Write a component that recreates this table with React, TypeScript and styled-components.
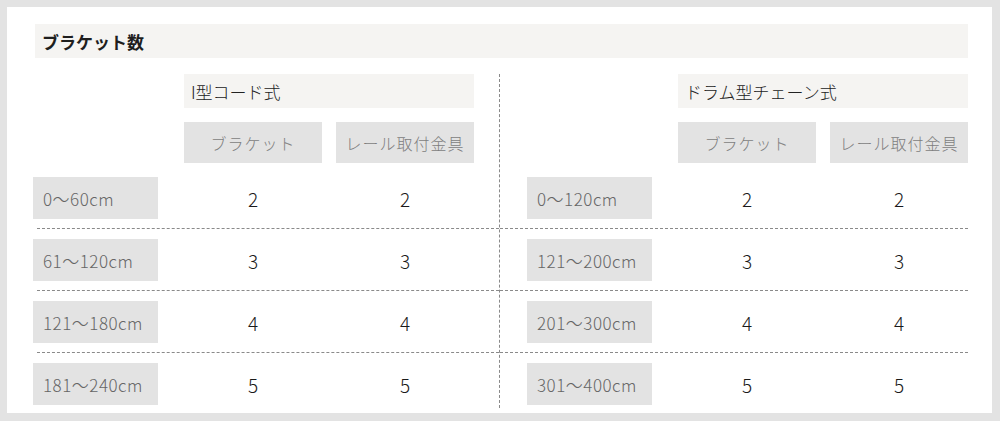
import React from 'react';
import styled, { createGlobalStyle } from 'styled-components';

const GlobalStyle = createGlobalStyle`
    html, body {
        margin: 0;
        padding: 0;
        background: #e3e3e3;
    }
    body {
        font-family: "Noto Sans CJK JP", "Noto Sans", sans-serif;
        color: #222;
    }
`;

const Panel = styled.div`
    margin: 7px 8px 8px 7px;
    background: #fff;
    height: 406px;
    box-sizing: border-box;
    padding: 17px 24px 0 26px;
    display: flex;
    flex-direction: column;
`;

const TitleBar = styled.div`
    margin-left: 2px;
    height: 34px;
    background: #f5f4f2;
    display: flex;
    align-items: center;
    padding-left: 7px;
    font-size: 17px;
    font-weight: bold;
    color: #1e1e1e;
`;

const Tables = styled.div`
    display: flex;
    margin-top: 16px;
`;

const Half = styled.div<{ $left?: boolean }>`
    display: flex;
    flex-direction: column;
    width: 468px;
    border-right: ${p => (p.$left ? '1px dashed #8a8a8a' : 'none')};
    padding-left: ${p => (p.$left ? '0' : '27px')};
    box-sizing: border-box;
`;

const GroupHeader = styled.div`
    margin-left: 151px;
    width: 290px;
    height: 34px;
    background: #f5f4f2;
    display: flex;
    align-items: center;
    padding-left: 7px;
    box-sizing: border-box;
    font-size: 17px;
    font-weight: 300;
    color: #222;
`;

const SubRow = styled.div`
    display: flex;
    margin-top: 14px;
    margin-left: 151px;
    gap: 14px;
    margin-bottom: 4px;
`;

const SubHeader = styled.div`
    width: 138px;
    height: 41px;
    background: #e3e3e3;
    display: flex;
    align-items: center;
    justify-content: center;
    font-size: 16px;
    font-weight: 300;
    letter-spacing: 1px;
    color: #7e7e7e;
`;

const Row = styled.div<{ $last?: boolean }>`
    display: flex;
    align-items: center;
    padding: 10px 0 ${p => (p.$last ? '3px' : '9px')};
`;

const Dash = styled.div<{ $inset: number }>`
    border-top: 1px dashed #8a8a8a;
    margin-left: ${p => p.$inset}px;
`;

const RangeLabel = styled.div`
    width: 125px;
    height: 42px;
    margin-right: 12px;
    background: #e3e3e3;
    display: flex;
    align-items: center;
    padding-left: 10px;
    box-sizing: border-box;
    font-size: 17px;
    font-weight: 300;
    letter-spacing: 0.5px;
    color: #666;
`;

const Value = styled.div`
    width: 138px;
    margin-left: 14px;
    text-align: center;
    font-size: 19px;
    font-weight: 300;
    color: #1a1a1a;
`;

interface TableData {
    title: string;
    rows: { range: string; bracket: number; rail: number }[];
}

const tables: TableData[] = [
    {
        title: 'I型コード式',
        rows: [
            { range: '0〜60cm', bracket: 2, rail: 2 },
            { range: '61〜120cm', bracket: 3, rail: 3 },
            { range: '121〜180cm', bracket: 4, rail: 4 },
            { range: '181〜240cm', bracket: 5, rail: 5 },
        ],
    },
    {
        title: 'ドラム型チェーン式',
        rows: [
            { range: '0〜120cm', bracket: 2, rail: 2 },
            { range: '121〜200cm', bracket: 3, rail: 3 },
            { range: '201〜300cm', bracket: 4, rail: 4 },
            { range: '301〜400cm', bracket: 5, rail: 5 },
        ],
    },
];

const App: React.FC = () => {
    return (
        <>
            <GlobalStyle />
            <Panel>
                <TitleBar>ブラケット数</TitleBar>
                <Tables>
                    {tables.map((table, t) => {
                        const left = t === 0;
                        return (
                            <Half key={t} $left={left}>
                                <GroupHeader>{table.title}</GroupHeader>
                                <SubRow>
                                    <SubHeader>ブラケット</SubHeader>
                                    <SubHeader>レール取付金具</SubHeader>
                                </SubRow>
                                {table.rows.map((row, i) => (
                                    <React.Fragment key={i}>
                                        {i > 0 && <Dash $inset={left ? 4 : -27} />}
                                        <Row $last={i === table.rows.length - 1}>
                                            <RangeLabel>{row.range}</RangeLabel>
                                            <Value>{row.bracket}</Value>
                                            <Value>{row.rail}</Value>
                                        </Row>
                                    </React.Fragment>
                                ))}
                            </Half>
                        );
                    })}
                </Tables>
            </Panel>
        </>
    );
};

export default App;
